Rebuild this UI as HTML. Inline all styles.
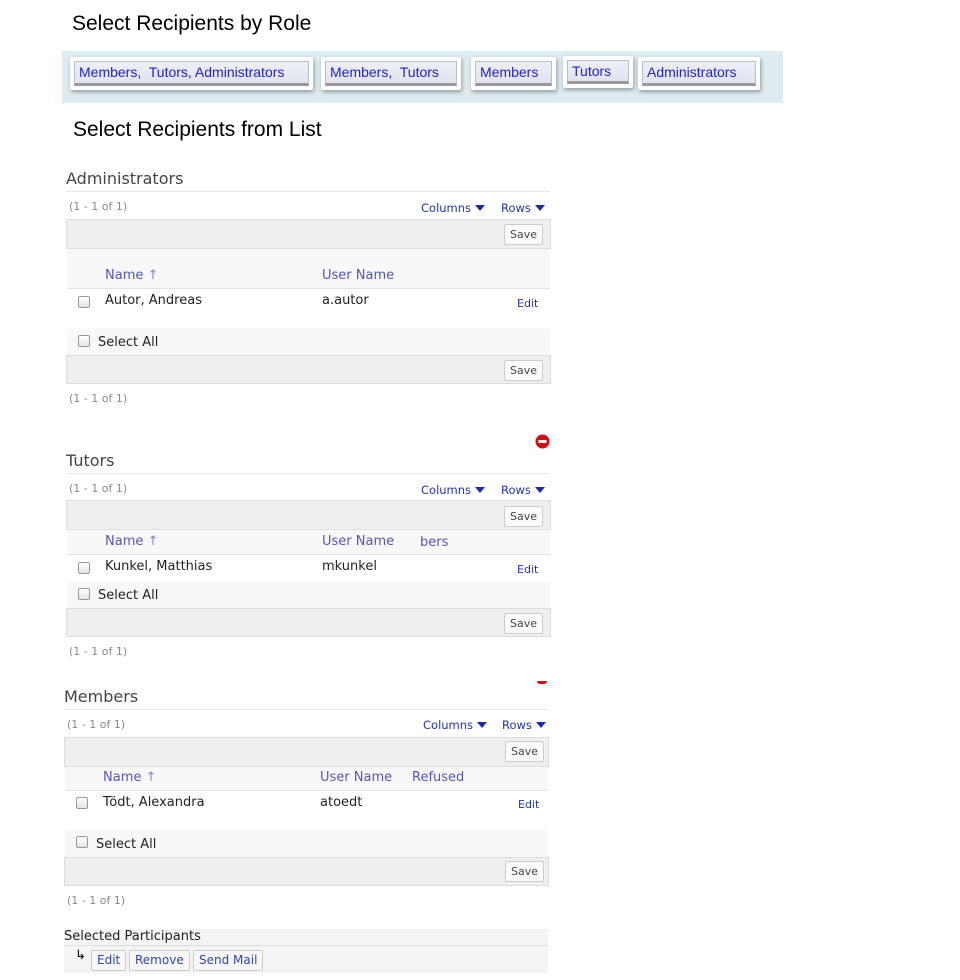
<!DOCTYPE html>
<html><head><meta charset="utf-8"><style>
*{margin:0;padding:0;box-sizing:border-box}
body{width:960px;height:980px;background:#fff;position:relative;font-family:"DejaVu Sans","Liberation Sans",sans-serif;overflow:hidden}
.a{position:absolute;white-space:nowrap}
.h1{font-family:"Liberation Sans",sans-serif;font-size:21px;color:#000}
.banner{left:62px;top:51px;width:721px;height:52px;background:#dcecf0}
.rb{position:absolute;top:6px;height:33px;background:#fff;box-shadow:1px 2px 4px rgba(0,0,0,.35);border-radius:2px}
.rb span{position:absolute;left:4px;top:4px;right:4px;bottom:4px;background:linear-gradient(#eef0f8,#e0e2ee);border:1px solid #bbc;border-bottom:3px solid #999;color:#2222cc;font-family:"Liberation Sans",sans-serif;font-size:14px;padding-left:4px;line-height:21px}
.hd{font-size:16px;color:#444}
.ln{height:1px;background:#e6e6e6}
.cnt{font-size:11px;color:#888}
.lnk{font-size:11.5px;color:#2233aa}
.tri{display:inline-block;border-left:5px solid transparent;border-right:5px solid transparent;border-top:6px solid #1a2aa8;margin-left:4px;vertical-align:1px}
.bar{background:#efefef;border:1px solid #ddd}
.save{position:absolute;width:39px;height:21px;border:1px solid #ccc;background:#fafafa;border-radius:2px;font-size:11px;color:#444;text-align:center;line-height:19px}
.hr{background:#f8f8f8}
.th{font-size:13px;color:#5555bb}
.td{font-size:13px;color:#222}
.cb{width:12px;height:12px;border:1px solid #999;border-radius:2px;background:linear-gradient(#fff,#e4e4e4)}
.edit{font-size:11px;color:#2233aa}
.btn{position:absolute;top:0;height:21px;border:1px solid #ccc;background:#f7f7f7;border-radius:2px;font-size:12px;color:#3344aa;line-height:19px;padding:0 5px}
</style></head><body>

<div class="a h1" style="left:72px;top:12px">Select Recipients by Role</div>
<div class="a banner">
 <div class="rb" style="left:8px;width:243px"><span>Members,&nbsp; Tutors, Administrators</span></div>
 <div class="rb" style="left:259px;width:140px"><span>Members,&nbsp; Tutors</span></div>
 <div class="rb" style="left:409px;width:85px"><span>Members</span></div>
 <div class="rb" style="left:501px;width:70px;top:5px;height:32px"><span>Tutors</span></div>
 <div class="rb" style="left:576px;width:122px"><span>Administrators</span></div>
</div>
<div class="a h1" style="left:73px;top:118px">Select Recipients from List</div>

<!-- Administrators -->
<div class="a hd" style="left:66px;top:169px">Administrators</div>
<div class="a ln" style="left:66px;top:191px;width:484px"></div>
<div class="a cnt" style="left:69px;top:200px">(1 - 1 of 1)</div>
<div class="a lnk" style="left:421px;top:201px">Columns<span class="tri"></span></div>
<div class="a lnk" style="left:501px;top:201px">Rows<span class="tri"></span></div>
<div class="a bar" style="left:66px;top:219px;width:485px;height:30px"></div>
<div class="save" style="left:504px;top:224px">Save</div>
<div class="a hr" style="left:67px;top:249px;width:483px;height:40px;border-bottom:1px solid #e2e2e2"></div>
<div class="a th" style="left:105px;top:268px">Name <span style="color:#7788cc">&#8593;</span></div>
<div class="a th" style="left:322px;top:268px">User Name</div>
<div class="a cb" style="left:78px;top:296px"></div>
<div class="a td" style="left:105px;top:293px">Autor, Andreas</div>
<div class="a td" style="left:322px;top:293px">a.autor</div>
<div class="a edit" style="left:517px;top:297px">Edit</div>
<div class="a hr" style="left:67px;top:329px;width:483px;height:26px"></div>
<div class="a cb" style="left:78px;top:335px"></div>
<div class="a td" style="left:98px;top:335px">Select All</div>
<div class="a bar" style="left:66px;top:355px;width:485px;height:29px"></div>
<div class="save" style="left:504px;top:360px">Save</div>
<div class="a cnt" style="left:69px;top:392px">(1 - 1 of 1)</div>

<svg class="a" style="left:535px;top:434px" width="15" height="15"><circle cx="7.5" cy="7.5" r="7" fill="#d01010"/><rect x="3.5" y="6" width="8" height="3" fill="#fff"/></svg>

<!-- Tutors -->
<div class="a hd" style="left:66px;top:451px">Tutors</div>
<div class="a ln" style="left:66px;top:473px;width:484px"></div>
<div class="a cnt" style="left:69px;top:482px">(1 - 1 of 1)</div>
<div class="a lnk" style="left:421px;top:483px">Columns<span class="tri"></span></div>
<div class="a lnk" style="left:501px;top:483px">Rows<span class="tri"></span></div>
<div class="a bar" style="left:66px;top:500px;width:485px;height:30px"></div>
<div class="save" style="left:504px;top:506px">Save</div>
<div class="a hr" style="left:67px;top:530px;width:483px;height:25px;border-bottom:1px solid #e2e2e2"></div>
<div class="a th" style="left:105px;top:534px">Name <span style="color:#7788cc">&#8593;</span></div>
<div class="a th" style="left:322px;top:534px">User Name</div>
<div class="a th" style="left:420px;top:535px">bers</div>
<div class="a cb" style="left:78px;top:562px"></div>
<div class="a td" style="left:105px;top:559px">Kunkel, Matthias</div>
<div class="a td" style="left:322px;top:559px">mkunkel</div>
<div class="a edit" style="left:517px;top:563px">Edit</div>
<div class="a hr" style="left:67px;top:582px;width:483px;height:26px"></div>
<div class="a cb" style="left:78px;top:588px"></div>
<div class="a td" style="left:98px;top:588px">Select All</div>
<div class="a bar" style="left:66px;top:608px;width:485px;height:29px"></div>
<div class="save" style="left:504px;top:613px">Save</div>
<div class="a cnt" style="left:69px;top:645px">(1 - 1 of 1)</div>

<div class="a" style="left:537px;top:681px;width:10px;height:3px;background:#d01010;border-radius:0 0 5px 5px"></div>

<!-- Members -->
<div class="a hd" style="left:64px;top:687px">Members</div>
<div class="a ln" style="left:64px;top:709px;width:484px"></div>
<div class="a cnt" style="left:67px;top:718px">(1 - 1 of 1)</div>
<div class="a lnk" style="left:423px;top:718px">Columns<span class="tri"></span></div>
<div class="a lnk" style="left:502px;top:718px">Rows<span class="tri"></span></div>
<div class="a bar" style="left:64px;top:737px;width:485px;height:30px"></div>
<div class="save" style="left:505px;top:741px">Save</div>
<div class="a hr" style="left:65px;top:767px;width:483px;height:24px;border-bottom:1px solid #e2e2e2"></div>
<div class="a th" style="left:103px;top:770px">Name <span style="color:#7788cc">&#8593;</span></div>
<div class="a th" style="left:320px;top:770px">User Name</div>
<div class="a th" style="left:412px;top:770px">Refused</div>
<div class="a cb" style="left:76px;top:797px"></div>
<div class="a td" style="left:103px;top:795px">Tödt, Alexandra</div>
<div class="a td" style="left:320px;top:795px">atoedt</div>
<div class="a edit" style="left:518px;top:798px">Edit</div>
<div class="a hr" style="left:65px;top:830px;width:483px;height:27px"></div>
<div class="a cb" style="left:76px;top:836px"></div>
<div class="a td" style="left:96px;top:837px">Select All</div>
<div class="a bar" style="left:64px;top:857px;width:485px;height:29px"></div>
<div class="save" style="left:505px;top:861px">Save</div>
<div class="a cnt" style="left:67px;top:894px">(1 - 1 of 1)</div>

<!-- Selected Participants -->
<div class="a" style="left:64px;top:929px;width:484px;height:44px;background:#f4f4f4"></div>
<div class="a" style="left:64px;top:945px;width:484px;height:1px;background:#ddd"></div>
<div class="a td" style="left:64px;top:929px;font-size:13px">Selected Participants</div>
<div class="a" style="left:75px;top:948px;font-size:13px;color:#000">&#8627;</div>
<div class="a" style="left:91px;top:950px;width:200px;height:21px">
 <div class="btn" style="left:0">Edit</div>
 <div class="btn" style="left:38px">Remove</div>
 <div class="btn" style="left:102px">Send Mail</div>
</div>
</body></html>
